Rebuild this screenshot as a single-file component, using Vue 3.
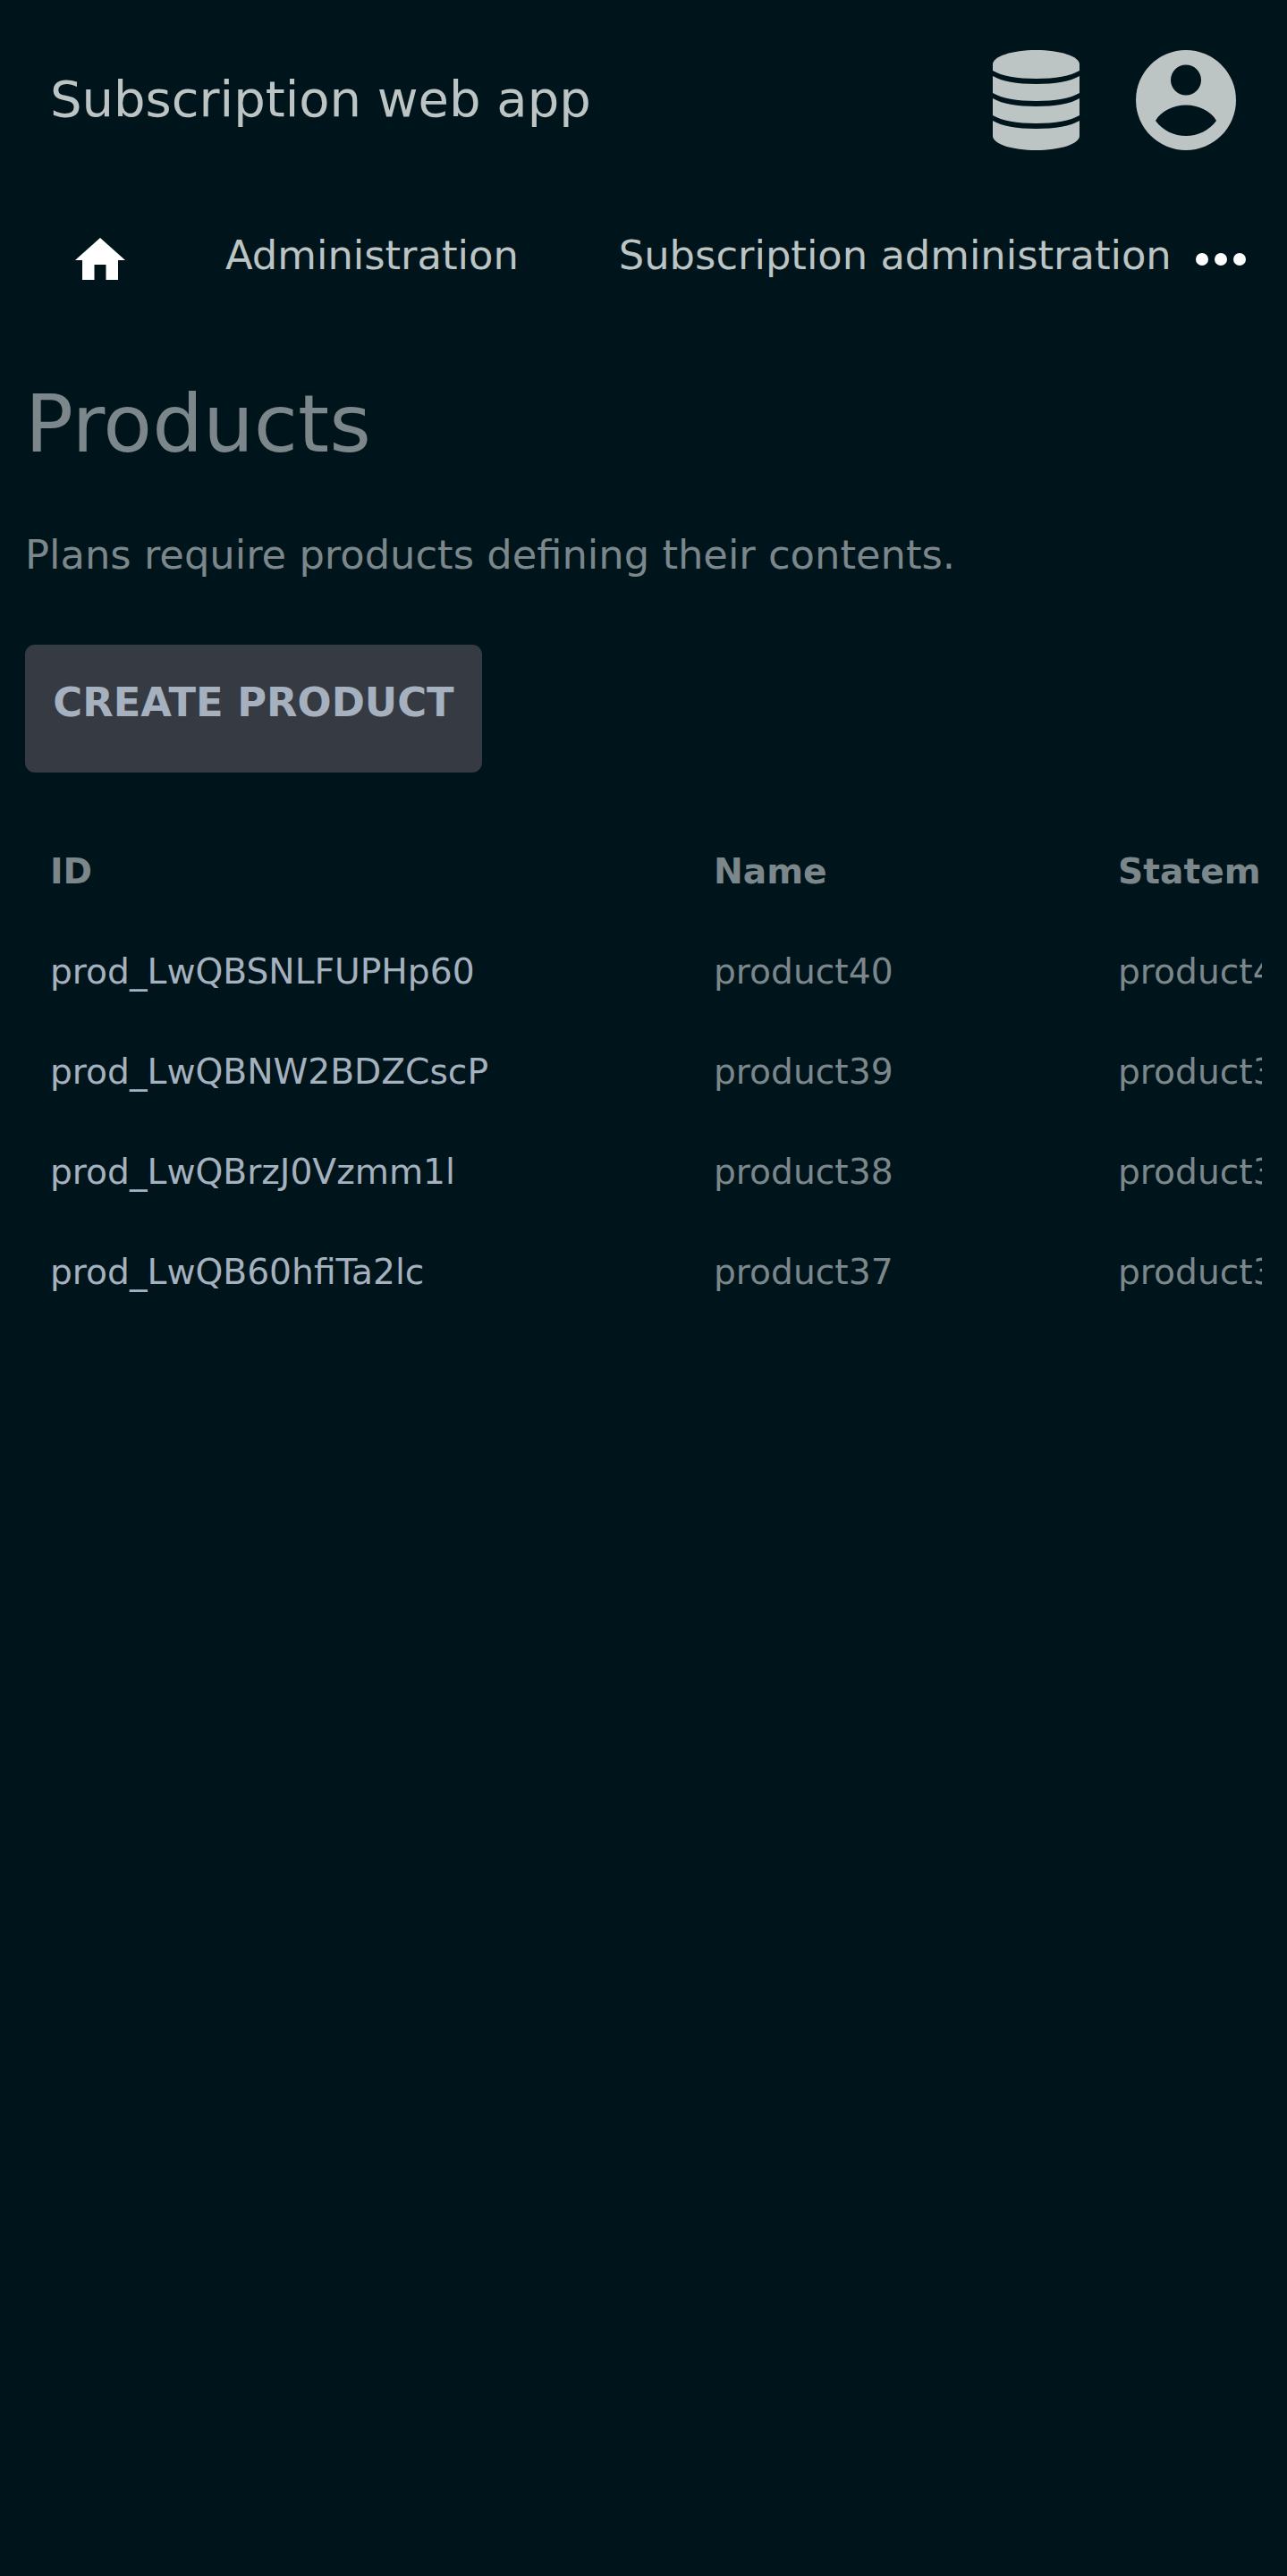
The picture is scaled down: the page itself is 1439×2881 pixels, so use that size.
<script setup>
const rows = [
  ['prod_LwQBSNLFUPHp60', 'product40', 'product40'],
  ['prod_LwQBNW2BDZCscP', 'product39', 'product39'],
  ['prod_LwQBrzJ0Vzmm1l', 'product38', 'product38'],
  ['prod_LwQB60hfiTa2lc', 'product37', 'product37'],
]
</script>

<template>
  <div class="page">
    <header class="top">
      <span class="brand">Subscription web app</span>
      <div class="actions">
        <svg class="db" viewBox="0 0 97 112" aria-hidden="true">
          <path d="M48.5 0C21.7 0 0 7 0 16V23C10 29 27 32 48.5 32S87 29 97 23V16C97 7 75.3 0 48.5 0Z" />
          <path d="M0 29C10 35 27 38 48.5 38S87 35 97 29V48C87 54 70 57 48.5 57S10 54 0 48Z" />
          <path d="M0 54C10 60 27 63 48.5 63S87 60 97 54V73C87 79 70 82 48.5 82S10 79 0 73Z" />
          <path d="M0 79C10 85 27 88 48.5 88S87 85 97 79V96C97 105 75.3 112 48.5 112S0 105 0 96Z" />
        </svg>
        <svg class="user" viewBox="0 0 112 112" aria-hidden="true">
          <path fill-rule="evenodd" d="M56 0a56 56 0 1 0 0 112a56 56 0 1 0 0-112ZM56 16.5a17 17 0 1 1 0 34a17 17 0 1 1 0-34ZM22 79C28 68 42 61.500 56 61.500S84 68 90 79C82 90 69 96 56 96S30 90 22 79Z" />
        </svg>
      </div>
    </header>

    <nav class="nav">
      <svg class="home" viewBox="0 0 56 48" aria-hidden="true">
        <path d="M28 0 56 25H48V47H34.5V30H21.5V47H8V25H0Z" />
      </svg>
      <span class="nav-item first">Administration</span>
      <span class="nav-item second">Subscription administration</span>
      <span class="dots" aria-hidden="true"><i></i><i></i><i></i></span>
    </nav>

    <main class="main">
      <h1>Products</h1>
      <p class="lead">Plans require products defining their contents.</p>
      <button class="create" type="button">CREATE PRODUCT</button>

      <div class="table-wrap">
        <div class="row head">
          <div class="cell id">ID</div>
          <div class="cell">Name</div>
          <div class="cell">Statement descriptor</div>
        </div>
        <div v-for="r in rows" :key="r[0]" class="row">
          <div class="cell id">{{ r[0] }}</div>
          <div class="cell muted">{{ r[1] }}</div>
          <div class="cell muted">{{ r[2] }}</div>
        </div>
      </div>
    </main>
  </div>
</template>

<style scoped>
.page {
  min-height: 2881px;
  background: #00141b;
  font-family: "DejaVu Sans", sans-serif;
  overflow: hidden;
}
.top {
  display: flex;
  justify-content: space-between;
  align-items: center;
  padding: 56px 57px 56px 56px;
}
.brand {
  font-size: 56px;
  line-height: 112px;
  margin-top: -2px;
  color: #bdc4c4;
}
.actions {
  display: flex;
  align-items: center;
  gap: 63px;
}
.actions svg {
  display: block;
  height: 112px;
  fill: #bdc4c4;
}
.db { width: 97px; }
.user { width: 112px; }
.nav {
  display: flex;
  align-items: center;
  height: 125px;
  padding: 0 46px 0 84px;
}
.home {
  width: 56px;
  height: 48px;
  fill: #fff;
  margin-top: 6px;
  flex: none;
}
.nav-item {
  font-size: 44.8px;
  line-height: 60px;
  margin-top: -2px;
  color: #bdc4c4;
  white-space: nowrap;
}
.first { margin-left: 112px; }
.second { margin-left: 112px; }
.dots {
  display: flex;
  gap: 7px;
  margin-left: 27px;
  margin-top: 6px;
}
.dots i {
  display: block;
  width: 14px;
  height: 14px;
  border-radius: 50%;
  background: #fff;
}
.main {
  padding: 69px 28px 0;
}
h1 {
  margin: 0;
  font-size: 89.6px;
  line-height: 112px;
  font-weight: 400;
  color: #7b878a;
}
.lead {
  margin: 61px 0 0;
  font-size: 44.8px;
  line-height: 60px;
  color: #7b878a;
}
.create {
  display: block;
  box-sizing: border-box;
  margin: 70px 0 0;
  width: 511px;
  height: 143px;
  padding: 0 0 13px;
  border: 0;
  border-radius: 11px;
  background: #363a42;
  color: #a5b1be;
  font: 700 44.8px/56px "DejaVu Sans", sans-serif;
  text-align: center;
}
.table-wrap {
  margin-top: 55px;
  width: 1383px;
  overflow: hidden;
}
.row {
  display: grid;
  grid-template-columns: 742px 452px 400px;
  height: 112px;
  align-items: center;
}
.cell {
  padding-left: 28px;
  font-size: 39.2px;
  line-height: 56px;
  white-space: nowrap;
  color: #7b878a;
}
.cell.id { color: #a5b1be; }
.head .cell {
  font-weight: 700;
  color: #7b878a;
}
.head .cell.id { color: #7b878a; }
</style>
